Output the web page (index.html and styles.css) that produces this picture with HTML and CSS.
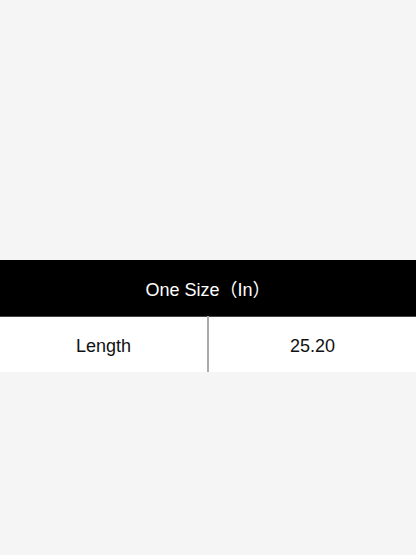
FILE: index.html
```html
<!DOCTYPE html>
<html lang="en">
<head>
  <meta charset="UTF-8">
  <title>Size Chart</title>
  <link rel="stylesheet" href="styles.css">
</head>
<body>

  <table class="size-table">
    <thead>
      <tr>
        <th colspan="2">One Size（In）</th>
      </tr>
    </thead>
    <tbody>
      <tr>
        <td>Length</td>
        <td>25.20</td>
      </tr>
    </tbody>
  </table>

</body>
</html>
```

FILE: styles.css
```css
body {
  margin: 0;
  padding-top: 260px;
  background: #f5f5f5;
  font-family: "Liberation Sans", Arial, "Noto Sans CJK SC", sans-serif;
}

.size-table {
  width: 100%;
  border-collapse: collapse;
  table-layout: fixed;
}

.size-table th {
  height: 56px;
  padding: 0;
  background: #000;
  color: #fff;
  font-size: 18px;
  font-weight: normal;
  border-bottom: 1px solid #444;
}

.size-table td {
  height: 51px;
  padding: 4px 0 0;
  background: #fff;
  color: #111;
  font-size: 18px;
  text-align: center;
}

.size-table td + td {
  border-left: 2px solid #aaa;
}
```
